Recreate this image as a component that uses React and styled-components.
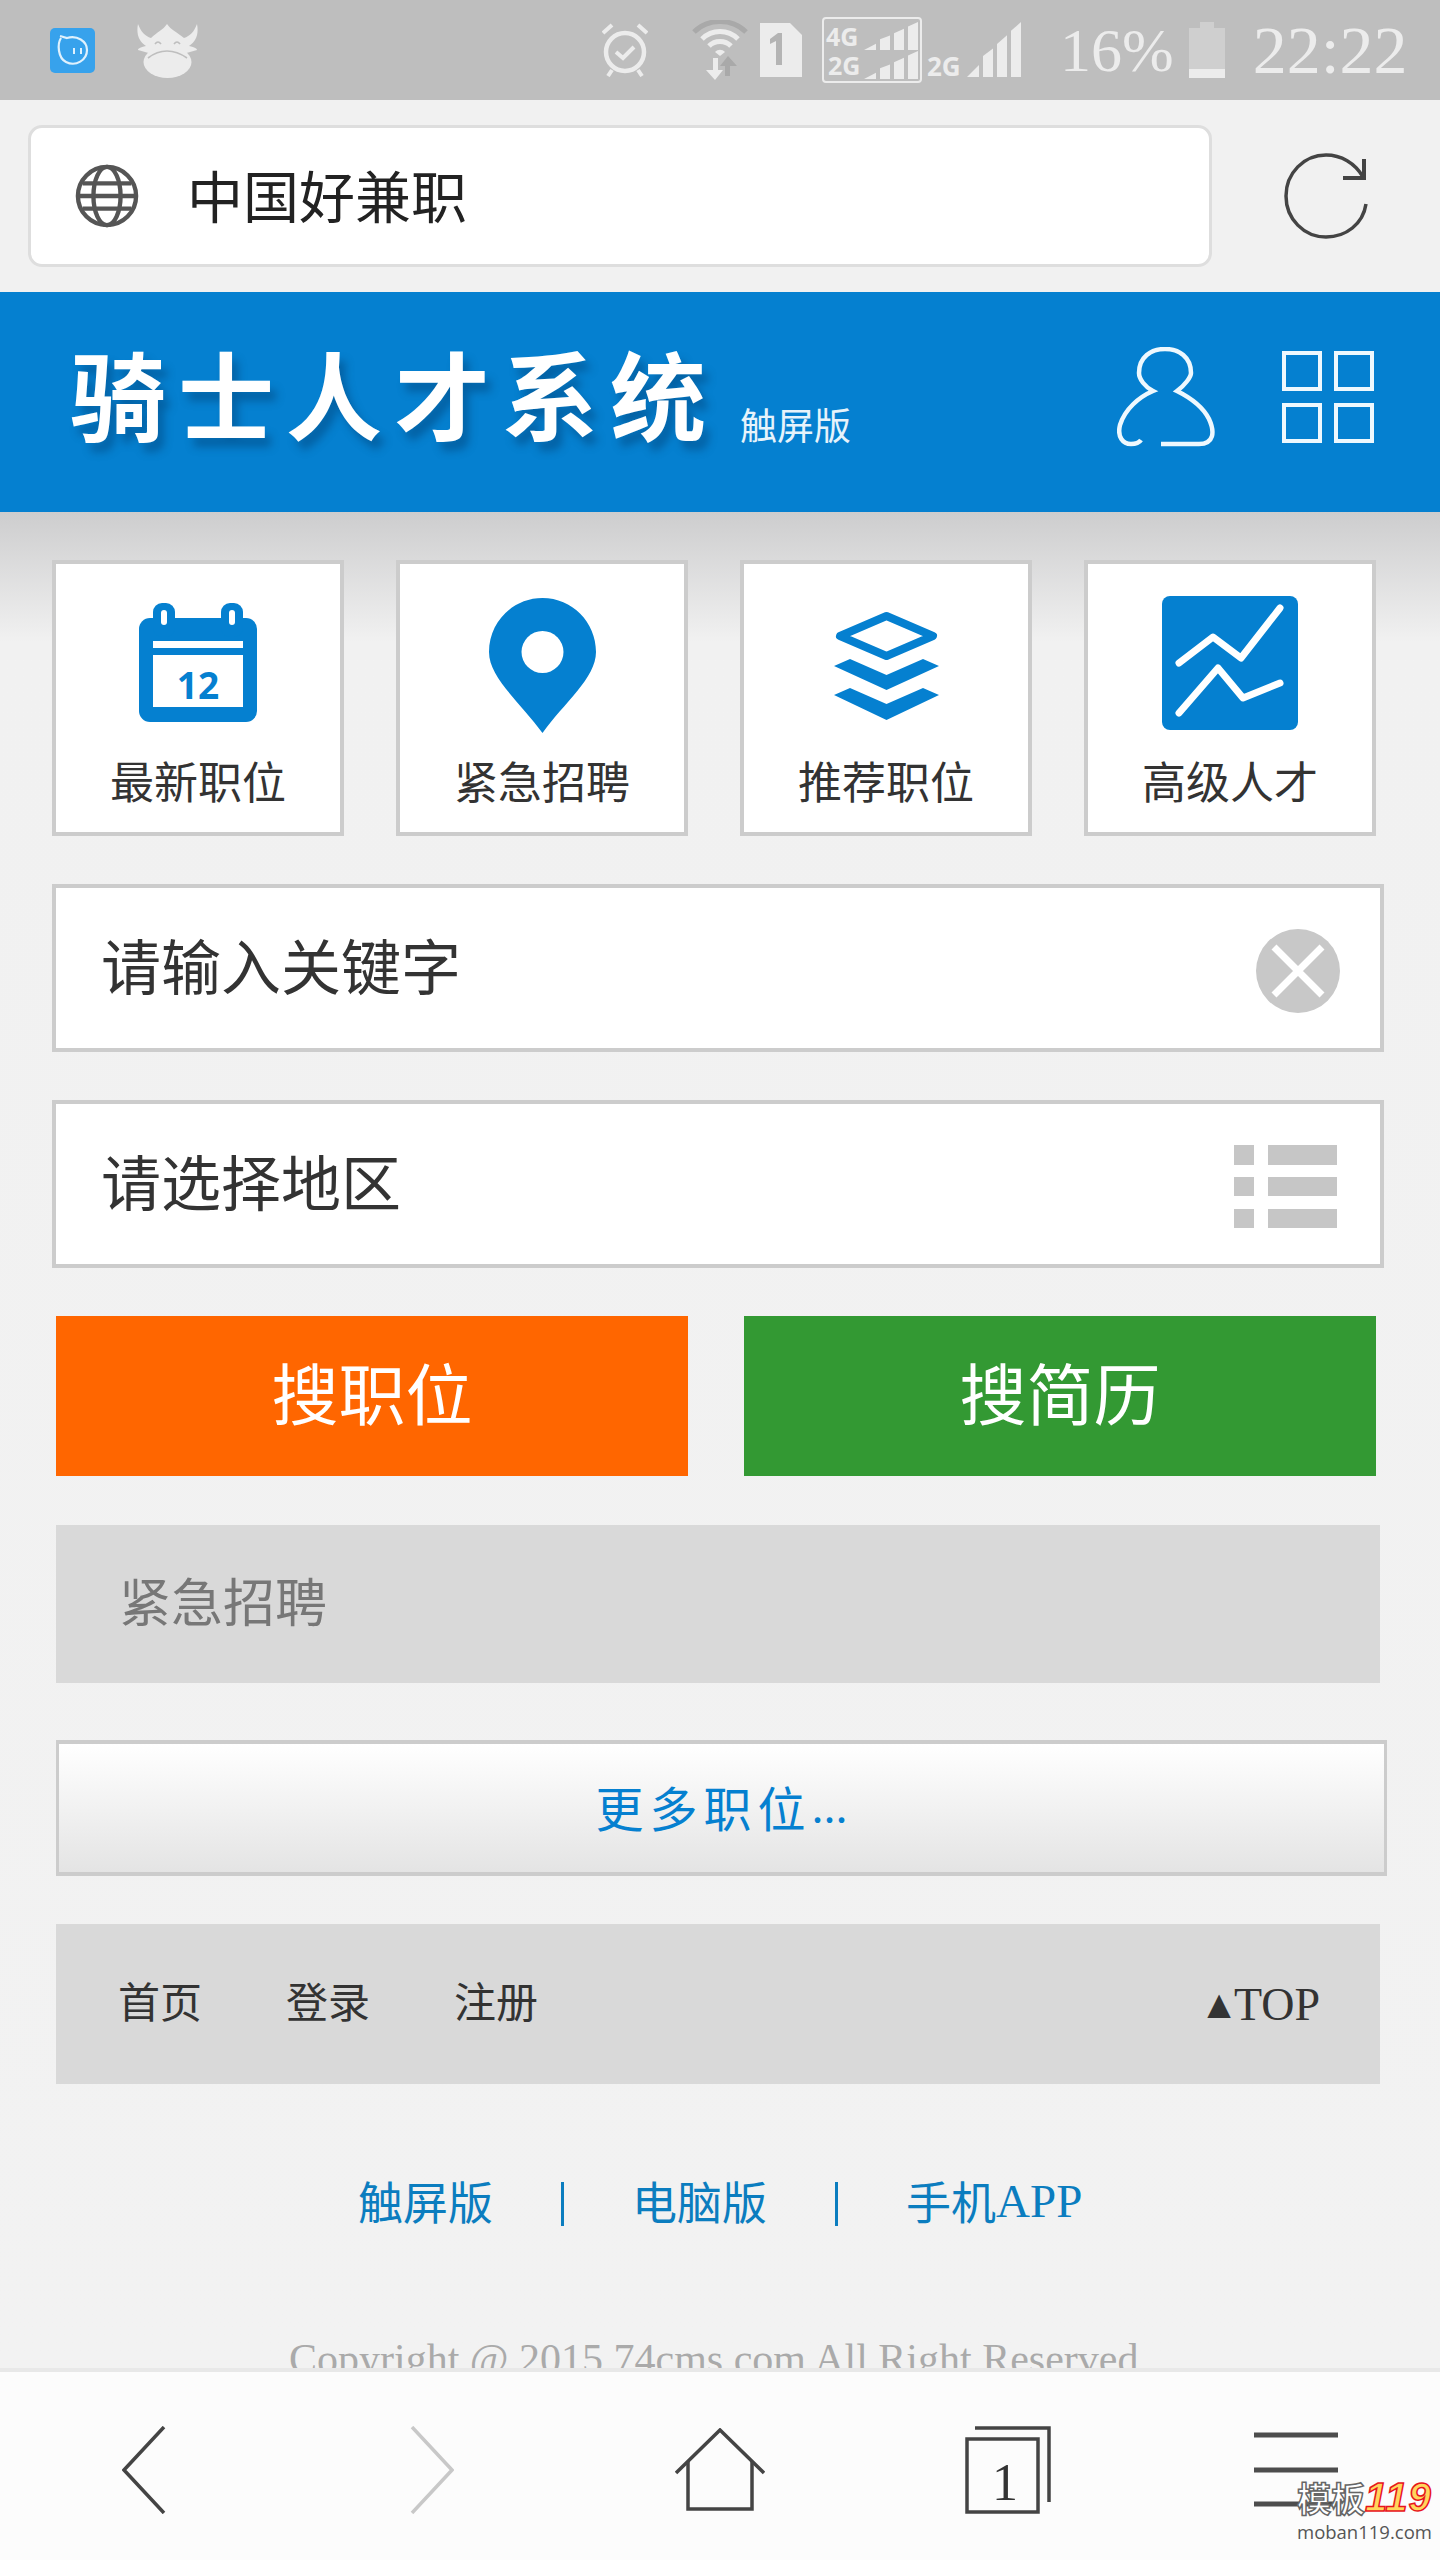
import React from 'react';
import styled, { createGlobalStyle } from 'styled-components';

const SERIF = '"Liberation Serif", "Noto Sans CJK SC", serif';
const CJK = '"Noto Sans CJK SC", "Liberation Sans", sans-serif';
const BLUE = '#0580d0';
const PALE = '#ececec';

const GlobalStyle = createGlobalStyle`
  html, body { margin: 0; padding: 0; background: #f2f2f2; }
  * { box-sizing: border-box; }
`;

const Page = styled.div`
  position: relative;
  width: 1440px;
  height: 2560px;
  overflow: hidden;
  background: #f2f2f2;
  font-family: ${SERIF};
`;

const StatusBar = styled.div`
  display: flex;
  align-items: center;
  height: 100px;
  padding-left: 50px;
  background: #bebebe;
`;

const StatusIcon = styled.svg`
  flex: none;
  display: block;
  margin-left: ${p => p.$ml || 0}px;
`;

const Clock = styled.span`
  flex: none;
  margin-left: ${p => p.$ml || 0}px;
  font-size: ${p => p.$size}px;
  line-height: 106px;
  color: ${PALE};
  font-family: "Liberation Serif", serif;
`;

const AddressBar = styled.div`
  display: flex;
  align-items: center;
  height: 192px;
  padding-left: 28px;
  background: #f1f1f1;
`;

const UrlBox = styled.div`
  display: flex;
  align-items: center;
  width: 1184px;
  height: 142px;
  padding-left: 44px;
  background: #fff;
  border: 3px solid #dedede;
  border-radius: 14px;
`;

const UrlText = styled.span`
  margin: -6px 0 0 48px;
  font-size: 56px;
  font-family: ${CJK};
  color: #222;
`;

const Reload = styled.svg`
  margin-left: 72px;
  flex: none;
`;

const Header = styled.div`
  display: flex;
  align-items: center;
  height: 220px;
  padding: 0 0 10px 70px;
  background: ${BLUE};
`;

const LogoText = styled.div`
  width: 670px;
  font-family: ${CJK};
  font-size: 96px;
  font-weight: 700;
  letter-spacing: 12px;
  line-height: 110px;
  margin-top: -10px;
  white-space: nowrap;
  color: #fff;
  text-shadow: 6px 9px 9px rgba(0, 60, 110, 0.45);
`;

const LogoTag = styled.span`
  width: 112px;
  margin-top: 54px;
  font-family: ${CJK};
  font-size: 37px;
  color: #e6f3fb;
`;

const HeaderIcon = styled.svg`
  flex: none;
  margin-left: ${p => p.$ml}px;
`;

const Main = styled.div`
  height: 1856px;
  padding: 48px 0 0 52px;
  background: linear-gradient(#cdcdce 0, #f1f1f1 130px, #f2f2f2 100%);
`;

const TileRow = styled.div`
  display: grid;
  grid-template-columns: repeat(4, 292px);
  column-gap: 52px;
`;

const Tile = styled.div`
  height: 276px;
  border: 4px solid #ccc;
  background: #fff;
`;

const TileIcon = styled.div`
  display: flex;
  align-items: center;
  justify-content: center;
  height: 198px;
`;

const TileLabel = styled.div`
  margin-top: -3px;
  text-align: center;
  font-family: ${CJK};
  font-size: 44px;
  line-height: 42px;
  color: #333;
`;

const Field = styled.div`
  display: flex;
  align-items: center;
  justify-content: space-between;
  width: 1332px;
  height: 168px;
  margin-top: 48px;
  padding: 0 ${p => p.$pr}px 0 45px;
  background: #fff;
  border: 4px solid #ccc;
  font-family: ${CJK};
  font-size: 60px;
  color: #333;

  svg {
    margin-top: 5px;
  }
`;

const FieldText = styled.span`
  margin-top: -10px;
`;

const ButtonRow = styled.div`
  display: grid;
  grid-template-columns: 632px 632px;
  column-gap: 56px;
  margin: 48px 0 0 4px;
`;

const SearchButton = styled.div`
  display: flex;
  align-items: center;
  justify-content: center;
  height: 160px;
  padding-bottom: 12px;
  background: ${p => p.$bg};
  color: #fff;
  font-family: ${CJK};
  font-size: 67px;
`;

const SectionBar = styled.div`
  display: flex;
  align-items: center;
  width: 1324px;
  height: 158px;
  margin: 49px 0 0 4px;
  padding: 0 0 10px 63px;
  background: #d9d9d9;
  color: #777;
  font-family: ${CJK};
  font-size: 52px;
`;

const MoreButton = styled.div`
  display: flex;
  align-items: center;
  justify-content: center;
  width: 1331px;
  height: 136px;
  margin: 57px 0 0 4px;
  padding-bottom: 4px;
  border: 3px solid #ccc;
  border-width: 4px 3px;
  background: linear-gradient(#fff, #e4e4e4);
  color: ${BLUE};
  font-family: ${CJK};
  font-size: 48px;
  letter-spacing: 6px;
`;

const MoreDots = styled.span`
  font-family: ${SERIF};
  letter-spacing: 0;
`;

const FootNav = styled.div`
  display: flex;
  align-items: center;
  width: 1324px;
  height: 160px;
  margin: 48px 0 0 4px;
  padding: 0 60px 10px 62px;
  background: #d9d9d9;
  color: #333;
  font-family: ${CJK};
  font-size: 42px;
`;

const FootLink = styled.span`
  width: 168px;
`;

const TopLink = styled.span`
  margin: 10px 0 0 auto;
  font-family: ${SERIF};
  font-size: 46px;
`;

const TopArrow = styled.span`
  margin-right: -5px;
  font-size: 40px;
  vertical-align: 2px;
`;

const Versions = styled.div`
  display: flex;
  align-items: center;
  height: 60px;
  margin: 86px 0 0 306px;
  color: #0b7dbf;
  font-family: ${CJK};
  font-size: 45px;
`;

const Divider = styled.span`
  width: 3px;
  height: 44px;
  margin: 8px 68px 0;
  background: #0b7dbf;
`;

const Latin = styled.span`
  font-family: ${SERIF};
  font-size: 47px;
  margin-top: 2px;
`;

const Copyright = styled.div`
  margin: 104px 0 0 237px;
  color: #aaa;
  font-size: 42px;
  line-height: 50px;
  white-space: nowrap;
  font-family: ${SERIF};
`;

const BottomBar = styled.div`
  position: absolute;
  left: 0;
  bottom: 0;
  display: grid;
  grid-template-columns: repeat(5, 288px);
  align-items: center;
  justify-items: center;
  width: 1440px;
  height: 192px;
  padding-top: 8px;
  background: #fcfcfc;
  border-top: 4px solid #e8e8e8;
`;

const Watermark = styled.div`
  position: absolute;
  left: 1297px;
  top: 2474px;
  width: 138px;
`;

const MarkRow = styled.div`
  display: flex;
  align-items: center;
  height: 46px;
`;

const MarkCjk = styled.span`
  font-family: ${CJK};
  font-size: 34px;
  font-weight: 700;
  color: #fff;
  -webkit-text-stroke: 1.5px #666;
`;

const MarkNum = styled.span`
  font-family: "Liberation Sans", sans-serif;
  font-style: italic;
  font-weight: 700;
  font-size: 40px;
  letter-spacing: 1px;
  color: #ffd65c;
  -webkit-text-stroke: 1.5px #e8141c;
`;

const MarkUrl = styled.div`
  margin-top: -1px;
  font-family: "Open Sans", sans-serif;
  font-size: 18.5px;
  line-height: 26px;
  white-space: nowrap;
  color: #555;
`;

const Signal = ({ x, base, h, fill = PALE }) => (
  <>
    <polygon points={`${x},${base} ${x + 12},${base} ${x + 12},${base - h * 0.22}`} fill={fill} />
    <polygon points={`${x + 16},${base} ${x + 26},${base} ${x + 26},${base - h * 0.52} ${x + 16},${base - h * 0.38}`} fill={fill} />
    <polygon points={`${x + 30},${base} ${x + 40},${base} ${x + 40},${base - h * 0.76} ${x + 30},${base - h * 0.6}`} fill={fill} />
    <polygon points={`${x + 44},${base} ${x + 54},${base} ${x + 54},${base - h} ${x + 44},${base - h * 0.84}`} fill={fill} />
  </>
);

const tiles = [
  {
    label: '最新职位',
    icon: (
      <svg width="118" height="120" viewBox="0 0 118 120">
        <rect x="0" y="15" width="118" height="104" rx="11" fill={BLUE} />
        <rect x="14" y="0" width="22" height="34" rx="9" fill={BLUE} />
        <rect x="82" y="0" width="22" height="34" rx="9" fill={BLUE} />
        <rect x="22" y="7" width="6" height="15" rx="3" fill="#fff" />
        <rect x="90" y="7" width="6" height="15" rx="3" fill="#fff" />
        <rect x="14" y="38" width="90" height="7" fill="#fff" />
        <rect x="14" y="52" width="90" height="52" fill="#fff" />
        <text x="59" y="96" textAnchor="middle" fontFamily="'Open Sans', sans-serif" fontWeight="700" fontSize="37" fill={BLUE}>12</text>
      </svg>
    ),
  },
  {
    label: '紧急招聘',
    icon: (
      <svg width="107" height="139" viewBox="0 -4 107 139">
        <path d="M53.5 0C83 0 107 24 107 54C107 80 75 105 53.5 135C32 105 0 80 0 54C0 24 24 0 53.5 0Z" fill={BLUE} />
        <circle cx="53.5" cy="54" r="21" fill="#fff" />
      </svg>
    ),
  },
  {
    label: '推荐职位',
    icon: (
      <svg width="105" height="118" viewBox="0 -8 105 118">
        <polygon points="52.5,4 99,24 52.5,44 6,24" fill="none" stroke={BLUE} strokeWidth="8" strokeLinejoin="round" />
        <polygon points="0,54 16,47 52.5,63 89,47 105,54 52.5,78" fill={BLUE} />
        <polygon points="0,83 16,76 52.5,92 89,76 105,83 52.5,108" fill={BLUE} />
      </svg>
    ),
  },
  {
    label: '高级人才',
    icon: (
      <svg width="136" height="134" viewBox="0 0 136 134">
        <rect width="136" height="134" rx="8" fill={BLUE} />
        <polyline points="17,67 51,41 79,62 118,12" fill="none" stroke="#fff" strokeWidth="7" strokeLinecap="round" strokeLinejoin="round" />
        <polyline points="17,117 56,72 81,102 118,87" fill="none" stroke="#fff" strokeWidth="7" strokeLinecap="round" strokeLinejoin="round" />
      </svg>
    ),
  },
];

export default function App() {
  return (
    <Page>
      <GlobalStyle />
      <StatusBar>
        <StatusIcon width="45" height="45" viewBox="0 0 45 45">
          <rect width="45" height="45" rx="5" fill="#37a2ec" />
          <path d="M11 10C7 16 8 30 16 34C26 39 37 32 37 22C37 13 27 7 17 10L10 8" fill="none" stroke="#dff1fd" strokeWidth="2.2" />
          <rect x="23" y="20" width="2" height="6" fill="#dff1fd" />
          <rect x="30" y="20" width="2" height="6" fill="#dff1fd" />
        </StatusIcon>
        <StatusIcon $ml="42" width="61" height="56" viewBox="0 0 61 56">
          <path d="M1 2C4 10 8 14 14 16C20 10 26 8 30 2C34 8 40 10 47 16C53 14 57 10 60 2C62 12 59 20 52 24C58 25 60 27 60 28L46 32H15L1 28C1 27 3 25 9 24C2 20 -1 12 1 2Z" fill={PALE} />
          <ellipse cx="30.5" cy="40" rx="24" ry="16" fill={PALE} />
          <path d="M18 22Q21 18 24 22M37 22Q40 18 43 22" fill="none" stroke="#bebebe" strokeWidth="1.6" />
          <path d="M11 36Q20 29 30 29T50 36" fill="none" stroke="#bebebe" strokeWidth="1.6" />
        </StatusIcon>
        <StatusIcon $ml="404" width="46" height="54" viewBox="0 0 46 54">
          <circle cx="23" cy="29" r="19" fill="none" stroke={PALE} strokeWidth="4.5" />
          <polyline points="14,29 21,35 32,24" fill="none" stroke={PALE} strokeWidth="4" />
          <path d="M1 10L10 2M45 10L36 2" stroke={PALE} strokeWidth="4" />
          <path d="M10 47L6 53M36 47L40 53" stroke={PALE} strokeWidth="4" />
        </StatusIcon>
        <StatusIcon $ml="44" width="56" height="60" viewBox="0 0 56 60">
          <path d="M2 12C16 -2 40 -2 54 12" fill="none" stroke="#a9a9a9" strokeWidth="5" />
          <path d="M10 19C20 9 36 9 46 19" fill="none" stroke={PALE} strokeWidth="5" />
          <path d="M17 26C23 20 33 20 39 26" fill="none" stroke={PALE} strokeWidth="5" />
          <path d="M23 32C26 29 30 29 33 32L28 36Z" fill={PALE} />
          <path d="M21 38H26V50H31L23 60L14 50H21Z" fill={PALE} />
          <path d="M38 56H33V46H28L36 36L45 46H38Z" fill="#a9a9a9" />
        </StatusIcon>
        <StatusIcon $ml="12" width="42" height="54" viewBox="0 0 42 54">
          <path d="M0 0H30L42 12V54H0Z" fill={PALE} />
          <path d="M22 10V42H16V18L10 21V16L18 10Z" fill="#b4b4b4" />
        </StatusIcon>
        <StatusIcon $ml="20" width="100" height="66" viewBox="0 0 100 66">
          <rect x="1" y="1" width="98" height="64" rx="3" fill="none" stroke={PALE} strokeWidth="2" />
          <text x="4" y="29" fontFamily="'Open Sans', sans-serif" fontWeight="700" fontSize="25" fill={PALE}>4G</text>
          <text x="6" y="58" fontFamily="'Open Sans', sans-serif" fontWeight="700" fontSize="25" fill={PALE}>2G</text>
          <Signal x={42} base={33} h={28} />
          <Signal x={42} base={62} h={28} />
        </StatusIcon>
        <StatusIcon $ml="5" width="96" height="70" viewBox="0 0 96 70">
          <text x="0" y="61" fontFamily="'Open Sans', sans-serif" fontWeight="700" fontSize="26" fill={PALE}>2G</text>
          <Signal x={40} base={62} h={55} />
        </StatusIcon>
        <Clock $ml="37" $size="62">16%</Clock>
        <StatusIcon $ml="15" width="36" height="56" viewBox="0 0 36 56">
          <rect x="11" y="0" width="14" height="8" fill="#cfcfcf" />
          <rect x="0" y="6" width="36" height="41" fill="#cfcfcf" />
          <rect x="0" y="47" width="36" height="9" fill={PALE} />
        </StatusIcon>
        <Clock $ml="28" $size="68">22:22</Clock>
      </StatusBar>

      <AddressBar>
        <UrlBox>
          <svg width="64" height="64" viewBox="0 0 66 66">
            <g fill="none" stroke="#555" strokeWidth="4.5">
              <circle cx="33" cy="33" r="30" />
              <ellipse cx="33" cy="33" rx="14" ry="30" />
              <path d="M8 20H58M8 46H58M3 33H63" />
            </g>
          </svg>
          <UrlText>中国好兼职</UrlText>
        </UrlBox>
        <Reload width="84" height="86" viewBox="0 0 84 86">
          <path d="M82 51C79 71 62 84 42 84C20 84 2 66 2 43C2 20 20 2 42 2C57 2 71 10 79 24" fill="none" stroke="#444" strokeWidth="3.5" />
          <path d="M80 6V25H59" fill="none" stroke="#444" strokeWidth="4" />
        </Reload>
      </AddressBar>

      <Header>
        <LogoText>骑士人才系统</LogoText>
        <LogoTag>触屏版</LogoTag>
        <HeaderIcon $ml="265" width="98" height="100" viewBox="0 0 98 100">
          <path d="M44 97H82C97 97 98 85 92 72C85 58 72 50 60 44C68 38 74 30 74 26C74 10 62 2 48 2C34 2 22 10 22 26C22 32 28 40 36 44C22 50 8 62 3 78C0 90 6 97 14 97C18 97 22 96 24 93" fill="none" stroke="#eef8fe" strokeWidth="4.5" />
        </HeaderIcon>
        <HeaderIcon $ml="67" width="92" height="92" viewBox="0 0 92 92">
          <g fill="none" stroke="#eef8fe" strokeWidth="4">
            <rect x="2" y="2" width="36" height="36" />
            <rect x="54" y="2" width="36" height="36" />
            <rect x="2" y="54" width="36" height="36" />
            <rect x="54" y="54" width="36" height="36" />
          </g>
        </HeaderIcon>
      </Header>

      <Main>
        <TileRow>
          {tiles.map(t => (
            <Tile key={t.label}>
              <TileIcon>{t.icon}</TileIcon>
              <TileLabel>{t.label}</TileLabel>
            </Tile>
          ))}
        </TileRow>

        <Field $pr="40">
          <FieldText>请输入关键字</FieldText>
          <svg width="84" height="84" viewBox="0 0 84 84">
            <circle cx="42" cy="42" r="42" fill="#c8c8c8" />
            <path d="M18 18L66 66M66 18L18 66" stroke="#fff" strokeWidth="7" />
          </svg>
        </Field>

        <Field $pr="42">
          <FieldText>请选择地区</FieldText>
          <svg width="104" height="84" viewBox="0 0 104 84" fill="#c6c6c6">
            <rect x="0" y="0" width="20" height="20" />
            <rect x="34" y="0" width="69" height="20" />
            <rect x="0" y="32" width="20" height="19" />
            <rect x="34" y="32" width="69" height="19" />
            <rect x="0" y="64" width="20" height="19" />
            <rect x="34" y="64" width="69" height="19" />
          </svg>
        </Field>

        <ButtonRow>
          <SearchButton $bg="#ff6600">搜职位</SearchButton>
          <SearchButton $bg="#339933">搜简历</SearchButton>
        </ButtonRow>

        <SectionBar>紧急招聘</SectionBar>
        <MoreButton>更多职位<MoreDots>...</MoreDots></MoreButton>

        <FootNav>
          <FootLink>首页</FootLink>
          <FootLink>登录</FootLink>
          <FootLink>注册</FootLink>
          <TopLink><TopArrow>▲</TopArrow>TOP</TopLink>
        </FootNav>

        <Versions>
          触屏版
          <Divider />
          电脑版
          <Divider />
          手机<Latin>APP</Latin>
        </Versions>

        <Copyright>Copyright @ 2015 74cms.com All Right Reserved</Copyright>
      </Main>

      <BottomBar>
        <svg width="44" height="88" viewBox="0 0 44 88">
          <polyline points="42,1 2,44 42,87" fill="none" stroke="#444" strokeWidth="3.5" />
        </svg>
        <svg width="44" height="88" viewBox="0 0 44 88">
          <polyline points="2,1 42,44 2,87" fill="none" stroke="#c8c8c8" strokeWidth="3.5" />
        </svg>
        <svg width="90" height="84" viewBox="0 0 90 84">
          <polyline points="1,45 45,2 89,45" fill="none" stroke="#444" strokeWidth="3.5" />
          <polyline points="13,33 13,81 77,81 77,33" fill="none" stroke="#444" strokeWidth="3.5" />
        </svg>
        <svg width="86" height="88" viewBox="0 0 86 88">
          <rect x="2" y="13" width="71" height="73" fill="none" stroke="#444" strokeWidth="3.5" />
          <polyline points="10,2 84,2 84,76" fill="none" stroke="#444" strokeWidth="3.5" />
          <text x="40" y="74" textAnchor="middle" fontFamily="'Liberation Serif', serif" fontSize="52" fill="#333">1</text>
        </svg>
        <svg width="84" height="76" viewBox="0 0 84 76">
          <path d="M0 3H84M0 38H84M0 72H84" stroke="#4d4d4d" strokeWidth="5" />
        </svg>
      </BottomBar>

      <Watermark>
        <MarkRow>
          <MarkCjk>模板</MarkCjk>
          <MarkNum>119</MarkNum>
        </MarkRow>
        <MarkUrl>moban119.com</MarkUrl>
      </Watermark>
    </Page>
  );
}
